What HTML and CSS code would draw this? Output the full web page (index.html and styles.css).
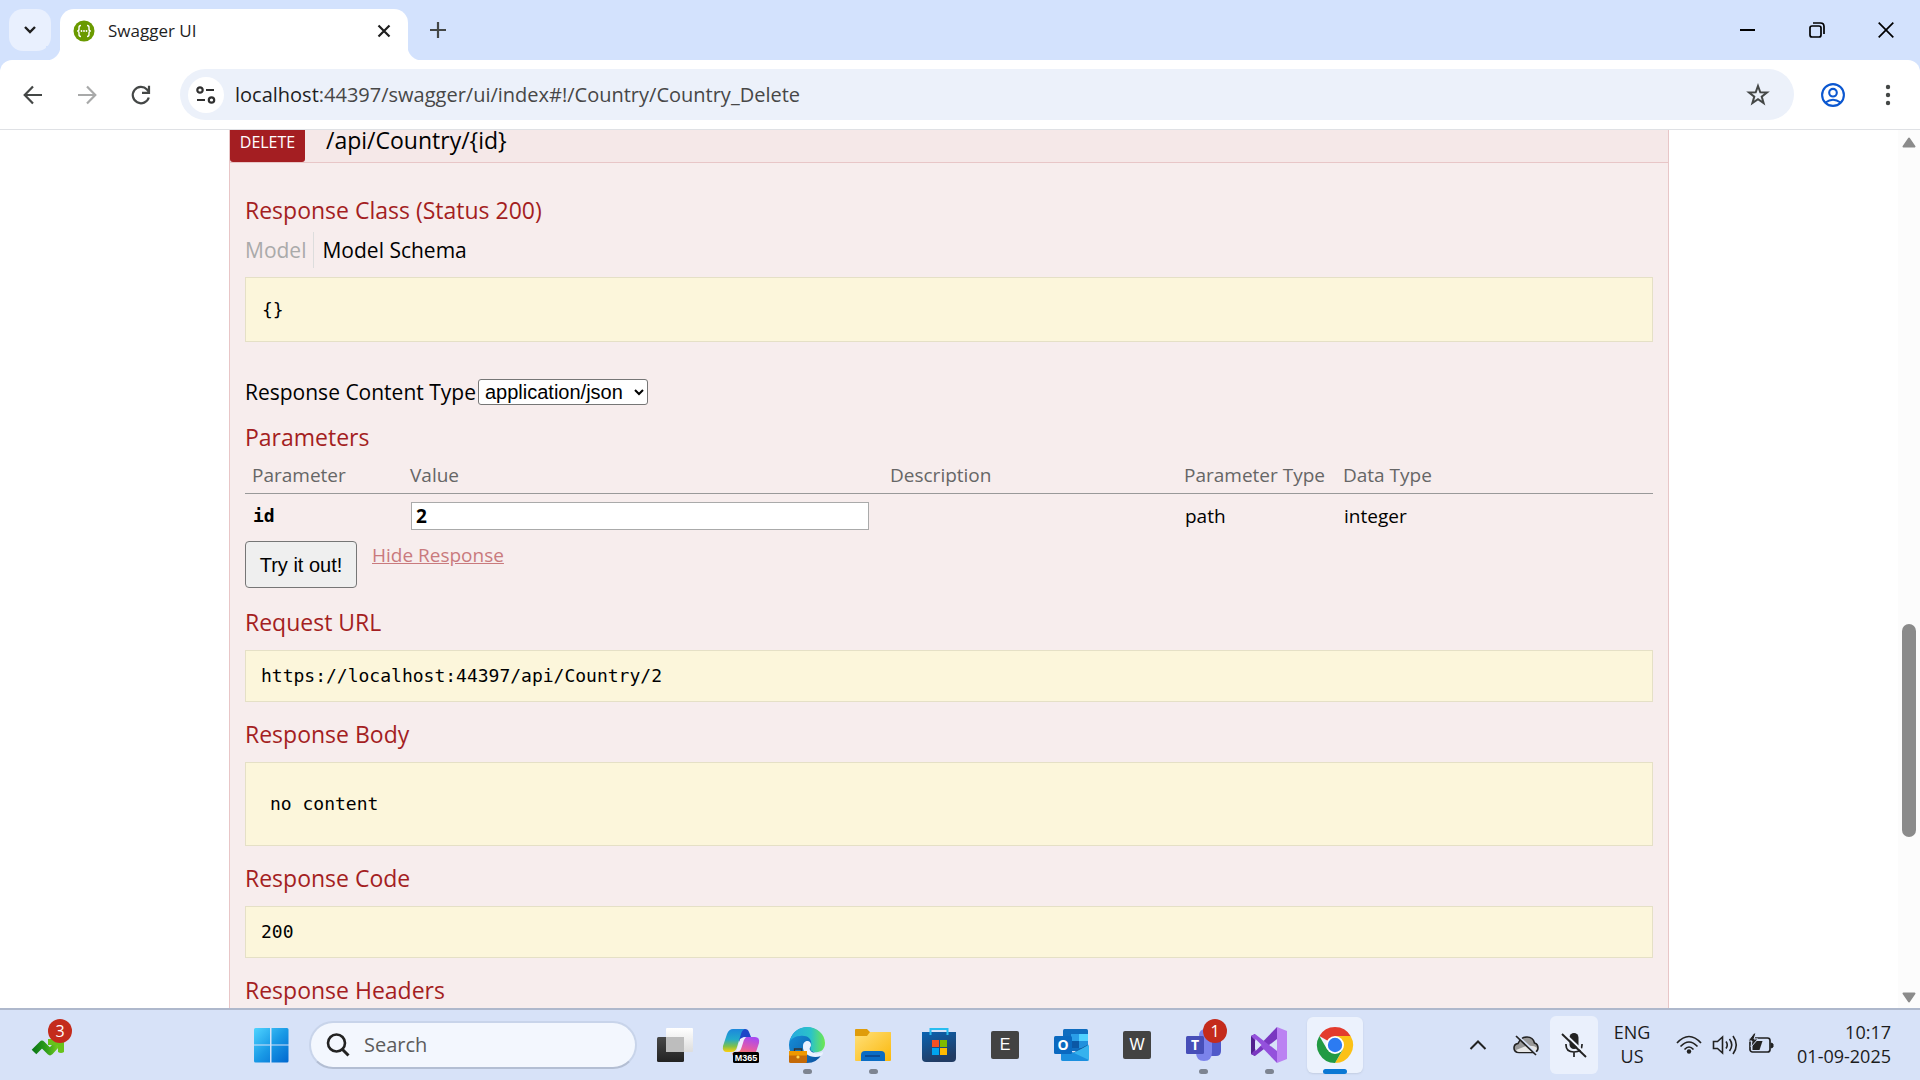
FILE: index.html
```html
<!DOCTYPE html>
<html lang="en">
<head>
<meta charset="utf-8">
<title>Swagger UI</title>
<link rel="stylesheet" href="styles.css">
</head>
<body>
<header class="browser">
  <div class="tabstrip">
    <button class="tab-search" aria-label="Search tabs"><svg width="12" height="8" viewBox="0 0 12 8"><path d="M1 1l5 5 5-5" fill="none" stroke="#1f1f1f" stroke-width="2.4"/></svg></button>
    <div class="tab">
      <svg width="22" height="22" viewBox="0 0 22 22"><circle cx="11" cy="11" r="10.5" fill="#6a9a00"/><path d="M8 5.500q-2 0-2 2v1.500q0 2-1.800 2 1.800 0 1.800 2v1.500q0 2 2 2M14 5.500q2 0 2 2v1.500q0 2 1.800 2-1.800 0-1.800 2v1.500q0 2-2 2" fill="none" stroke="#fff" stroke-width="1.400"/><g fill="#fff"><circle cx="8.500" cy="11" r=".9"/><circle cx="11" cy="11" r=".9"/><circle cx="13.500" cy="11" r=".9"/></g></svg>
      <span class="tab-title">Swagger UI</span>
      <button class="bare" aria-label="Close tab"><svg width="14" height="14" viewBox="0 0 14 14"><path d="M1.500 1.500l11 11m0-11l-11 11" stroke="#1f1f1f" stroke-width="2.200"/></svg></button>
    </div>
    <button class="bare new-tab" aria-label="New tab"><svg width="16" height="16" viewBox="0 0 16 16"><path d="M8 0v16M0 8h16" stroke="#444746" stroke-width="2.200"/></svg></button>
    <div class="window-controls">
      <button class="bare" aria-label="Minimize"><svg width="16" height="16" viewBox="0 0 16 16"><path d="M0 8h15" stroke="#000" stroke-width="2"/></svg></button>
      <button class="bare" aria-label="Restore"><svg width="16" height="16" viewBox="0 0 16 16"><rect x="1" y="4" width="11" height="11" rx="2" fill="none" stroke="#000" stroke-width="1.700"/><path d="M4 1h7.500q3.500 0 3.500 3.500V12" fill="none" stroke="#000" stroke-width="1.700"/></svg></button>
      <button class="bare" aria-label="Close"><svg width="16" height="16" viewBox="0 0 16 16"><path d="M.7.7l14.600 14.600m0-14.600L.7 15.300" stroke="#000" stroke-width="1.700"/></svg></button>
    </div>
  </div>
  <div class="toolbar">
    <button class="bare nav" aria-label="Back"><svg width="20" height="20" viewBox="0 0 20 20"><path d="M19 10H2M10 1.500L1.700 10l8.300 8.500" fill="none" stroke="#444746" stroke-width="2.200"/></svg></button>
    <button class="bare nav" aria-label="Forward"><svg width="20" height="20" viewBox="0 0 20 20"><path d="M1 10h17M10 1.500l8.300 8.500-8.300 8.500" fill="none" stroke="#a8a9a9" stroke-width="2.200"/></svg></button>
    <button class="bare nav" aria-label="Reload"><svg width="20" height="20" viewBox="0 0 20 20"><path d="M17.800 12.500A8.200 8.200 0 1 1 16 4.500L18 7" fill="none" stroke="#444746" stroke-width="2.200"/><path d="M18 .8v7h-7" fill="none" stroke="#444746" stroke-width="2.200"/></svg></button>
    <div class="omnibox">
      <button class="site-info" aria-label="View site information"><svg width="20" height="18" viewBox="0 0 20 18"><g fill="none" stroke="#303030" stroke-width="2.200"><circle cx="4" cy="4" r="2.700"/><path d="M10 4h8M1 14h8"/><circle cx="15.500" cy="14" r="2.700"/></g></svg></button>
      <a class="url" href="#!/Country/Country_Delete"><span class="host">localhost</span>:44397/swagger/ui/index#!/Country/Country_Delete</a>
      <button class="bare" aria-label="Bookmark this tab"><svg width="24" height="24" viewBox="0 0 24 24"><path d="M12 3l2.300 6.300 6.700.2-5.300 4.100 1.900 6.400-5.600-3.800L6.400 20l1.900-6.400L3 9.500l6.700-.2z" fill="none" stroke="#444746" stroke-width="2"/></svg></button>
    </div>
    <button class="bare profile" aria-label="Profile"><svg width="24" height="24" viewBox="0 0 24 24"><g fill="none" stroke="#0b57d0" stroke-width="2.100"><circle cx="12" cy="12" r="10.900"/><circle cx="12" cy="9.700" r="3.800"/><path d="M4.500 19.500q7.500-5.500 15 0"/></g></svg></button>
    <button class="bare dots" aria-label="Menu"><svg width="6" height="22" viewBox="0 0 6 22"><g fill="#444746"><circle cx="3" cy="3" r="2.200"/><circle cx="3" cy="11" r="2.200"/><circle cx="3" cy="19" r="2.200"/></g></svg></button>
  </div>
</header>

<div class="viewport">
  <main class="page">
    <section class="operation">
      <div class="op-heading">
        <a class="method" href="#!/Country/Country_Delete">DELETE</a>
        <a class="path" href="#!/Country/Country_Delete">/api/Country/{id}</a>
      </div>
      <div class="op-content">
        <h4>Response Class (Status 200)</h4>
        <div class="signature-nav">
          <a class="model" href="#model">Model</a>
          <a class="schema" href="#schema">Model Schema</a>
        </div>
        <pre class="snippet schema-box">{}</pre>
        <div class="content-type">
          <label for="ctype">Response Content Type</label>
          <select id="ctype"><option>application/json</option></select>
        </div>
        <h4 class="after-select">Parameters</h4>
        <table>
          <colgroup><col class="c-name"><col class="c-value"><col class="c-desc"><col class="c-kind"><col></colgroup>
          <thead><tr><th>Parameter</th><th>Value</th><th>Description</th><th>Parameter Type</th><th>Data Type</th></tr></thead>
          <tbody><tr><td class="code"><label for="param-id">id</label></td><td class="field"><input id="param-id" type="text" value="2"></td><td></td><td>path</td><td>integer</td></tr></tbody>
        </table>
        <div class="submit-row">
          <button class="submit">Try it out!</button>
          <a class="hide" href="#hide">Hide Response</a>
        </div>
        <h4>Request URL</h4>
        <pre class="snippet">https://localhost:44397/api/Country/2</pre>
        <h4>Response Body</h4>
        <pre class="snippet body-box">no content</pre>
        <h4>Response Code</h4>
        <pre class="snippet">200</pre>
        <h4>Response Headers</h4>
      </div>
    </section>
  </main>
  <div class="scrollbar">
    <svg width="14" height="11" viewBox="0 0 14 11"><path d="M7 1.500L12.500 9.500h-11z" fill="#8b8b8b" stroke="#8b8b8b" stroke-width="2" stroke-linejoin="round"/></svg>
    <div class="track"><div class="thumb"></div></div>
    <svg width="14" height="11" viewBox="0 0 14 11"><path d="M7 9.500L12.500 1.500h-11z" fill="#8b8b8b" stroke="#8b8b8b" stroke-width="2" stroke-linejoin="round"/></svg>
  </div>
</div>

<footer class="taskbar">
  <button class="app widgets" aria-label="Widgets">
    <svg width="36" height="36" viewBox="0 0 36 36"><defs><linearGradient id="wg"><stop offset="0" stop-color="#0d7a17"/><stop offset=".45" stop-color="#2c9c1a"/><stop offset="1" stop-color="#7ed321"/></linearGradient></defs><path d="M4 25l8-8 8 8 10-11" fill="none" stroke="url(#wg)" stroke-width="6.500" stroke-linejoin="round"/><path d="M18 12h16v13q-3 2-6 0v-7h-10z" fill="#67c31b"/></svg>
    <span class="badge">3</span>
  </button>
  <div class="apps">
    <button class="app" aria-label="Start"><svg width="36" height="36" viewBox="0 0 36 36"><defs><linearGradient id="st" x2="1" y2="1"><stop offset="0" stop-color="#4fd4ff"/><stop offset=".5" stop-color="#1a9ae6"/><stop offset="1" stop-color="#0067cf"/></linearGradient></defs><path d="M2.500 1H17v16.500H1V2.500Q1 1 2.500 1zM18.500 1H34q1.500 0 1.500 1.500v15h-17zM1 18.500h16V35.500H2.500Q1 35.500 1 34zM18.500 18.500h17V34q0 1.500-1.500 1.500H18.500z" fill="url(#st)"/></svg></button>
    <label class="search"><svg width="24" height="24" viewBox="0 0 24 24"><circle cx="10.500" cy="10" r="8.500" fill="none" stroke="#222" stroke-width="2.600"/><path d="M16.500 16.500l6 6" stroke="#222" stroke-width="3"/></svg><input type="text" placeholder="Search" aria-label="Search"></label>
    <button class="app" aria-label="Task view"><svg width="36" height="36" viewBox="0 0 36 36"><defs><linearGradient id="tv" x2="0" y2="1"><stop offset="0" stop-color="#484848"/><stop offset="1" stop-color="#222"/></linearGradient><linearGradient id="tw" x2="0" y2="1"><stop offset="0" stop-color="#fff"/><stop offset="1" stop-color="#ddd"/></linearGradient></defs><rect x="0" y="10" width="27" height="25" rx="1.500" fill="url(#tv)"/><rect x="9" y="1" width="27" height="24" rx="1" fill="url(#tw)"/><path d="M9 10h18v15H9z" fill="#bdbdbd"/></svg></button>
    <button class="app" aria-label="Microsoft 365 Copilot"><svg width="36" height="36" viewBox="0 0 36 36"><defs><linearGradient id="ca" x2="0" y2="1"><stop offset="0" stop-color="#1d87dc"/><stop offset=".45" stop-color="#22aacb"/><stop offset=".75" stop-color="#7fc04b"/><stop offset="1" stop-color="#ffcf0c"/></linearGradient><linearGradient id="cb" x1=".6" x2=".3" y2="1"><stop offset="0" stop-color="#a94af0"/><stop offset=".5" stop-color="#e35aa8"/><stop offset="1" stop-color="#ff8f3a"/></linearGradient></defs><path d="M16 2h6q3 0 4 3l2 5h-6q-4 0-6 6z" fill="#1d45c8"/><path d="M10 2h12q-3 1-4 5l-4 13q-1 5-6 5H4q-5 0-4-6l4-12q2-5 6-5z" fill="url(#ca)"/><path d="M24 10h8q5 0 4 6l-3 9q-2 6-8 6H13q-3 0-4-5 5 0 7-6l3-6q2-4 5-4z" fill="url(#cb)"/><path d="M17 12q3-2 6-2-2 2-3 6l-2 6q-1 3-5 3 1-2 2-6z" fill="#eef"/><rect x="10" y="25" width="26" height="11" rx="1.500" fill="#000"/><text x="23" y="34" class="tiny" text-anchor="middle">M365</text></svg></button>
    <button class="app open" aria-label="Edge"><svg width="36" height="36" viewBox="0 0 36 36"><defs><linearGradient id="ea" x2="1"><stop offset="0" stop-color="#26a9df"/><stop offset=".6" stop-color="#2bc3c8"/><stop offset="1" stop-color="#6ee84f"/></linearGradient><linearGradient id="eb" x2="1" y2="1"><stop offset="0" stop-color="#1796df"/><stop offset="1" stop-color="#0b4f9e"/></linearGradient></defs><path d="M0 18A18 18 0 0 1 32 7L24 25q5 3 9 2-5 9-15 9A18 18 0 0 1 0 18z" fill="url(#eb)"/><path d="M1 14C3 5 10 0 18 0c10 0 18 7 18 16 0 7-5 10-11 9-4-1-4-3-3-6 2-8-5-11-11-10C7 9 3 11 1 14z" fill="url(#ea)"/><path d="M14 19c0-6 8-7 8-1 0 2-2 3-1 5 2 4 9 4 13 2 0 2-1 3-2 4-8 3-19-1-18-10z" fill="#eaf2ff"/><rect y="24" width="18" height="12" rx="1.500" fill="#c46a08"/><path d="M0 24h18v4.500H0z" fill="#ee9800"/><path d="M5.500 24v-2h7v2" fill="none" stroke="#333" stroke-width="1.300"/><circle cx="9" cy="30" r="1.600" fill="#ffd34e"/></svg></button>
    <button class="app open" aria-label="File Explorer"><svg width="36" height="36" viewBox="0 0 36 36"><defs><linearGradient id="fe" x2="1" y2="1"><stop offset="0" stop-color="#ffe07a"/><stop offset="1" stop-color="#fbb80b"/></linearGradient></defs><path d="M0 3q0-1 1-1h11l3 3h19q2 0 2 2v6H0z" fill="#df9c0a"/><path d="M0 9h12l3-4h20q1 0 1 1v27q0 1-1 1H1q-1 0-1-1z" fill="url(#fe)"/><path d="M6 34v-6q0-4 4-4h16q4 0 4 4v6z" fill="#0a6cc4"/><path d="M10 29h15" stroke="#0b4084" stroke-width="1.500"/></svg></button>
    <button class="app" aria-label="Microsoft Store"><svg width="36" height="36" viewBox="0 0 36 36"><defs><linearGradient id="ms" x2=".4" y2="1"><stop offset="0" stop-color="#0a63b2"/><stop offset="1" stop-color="#213b63"/></linearGradient></defs><path d="M9.500 7V2h17v5" fill="none" stroke="#28bdf0" stroke-width="2"/><path d="M1 5h34v26q0 4-4 4H5q-4 0-4-4z" fill="url(#ms)"/><path d="M9.500 5v3m17-3v3" stroke="#28bdf0" stroke-width="2"/><path d="M11 13h7v7h-7z" fill="#f25022"/><path d="M19 13h7v7h-7z" fill="#7fba00"/><path d="M11 21h7v7h-7z" fill="#00a4ef"/><path d="M19 21h7v7h-7z" fill="#ffb900"/></svg></button>
    <button class="app"><span class="letter">E</span></button>
    <button class="app" aria-label="Outlook"><svg width="36" height="36" viewBox="0 0 36 36"><rect x="10" y="2" width="25" height="22" rx="1.500" fill="#0f6cbf"/><path d="M18 7h8v7h-8z" fill="#2a9ee8"/><path d="M26 7h9v7h-9z" fill="#4fd0ff"/><path d="M18 14h8v7h-8z" fill="#0b57a5"/><path d="M26 14h9v7h-9z" fill="#2090dd"/><path d="M36 17L9 32V20l13 7z" fill="#0f4a86"/><path d="M36 18v14q0 2-2 2H10q-2 0-2-2z" fill="#35b2ee"/><path d="M8 20l28 13-2 1H10q-2 0-2-2z" fill="#1b8fdf"/><rect x="1" y="9" width="18" height="18" rx="1.500" fill="#0a69c0"/><text x="10" y="23" class="logo-o" text-anchor="middle">O</text></svg></button>
    <button class="app"><span class="letter">W</span></button>
    <button class="app open" aria-label="Teams"><svg width="36" height="36" viewBox="0 0 36 36"><circle cx="20" cy="8" r="6" fill="#7b83eb"/><circle cx="31" cy="9" r="4" fill="#5059c9"/><path d="M22 13h14v11q0 5-5 5h-5z" fill="#5059c9"/><path d="M11 13h16v12q0 9-8 9t-8-9z" fill="#7b83eb"/><rect x="1" y="9" width="18" height="18" rx="1.500" fill="#464eb8"/><text x="10" y="23" class="logo-o" text-anchor="middle">T</text></svg><span class="badge">1</span></button>
    <button class="app open" aria-label="Visual Studio"><svg width="36" height="36" viewBox="0 0 36 36"><path d="M0 9l4-2v22l-4-2z" fill="#52218f"/><path d="M4 29l-4-2L26 0v12z" fill="#7a37c0"/><path d="M0 9l4-2 22 17v12z" fill="#9451dc"/><path d="M26 0l10 4v28l-10 4z" fill="#bb82f2"/><path d="M4.500 12v12l6-6z" fill="#dce6fa"/></svg></button>
    <button class="app active" aria-label="Chrome"><svg width="36" height="36" viewBox="0 0 36 36"><path d="M18 18L2.400 9A18 18 0 0 1 33.600 9z" fill="#e33b2e"/><path d="M18 9h15.600A18 18 0 0 1 18 36l8-13.500z" fill="#fbc116"/><path d="M2.400 9A18 18 0 0 0 18 36l7.800-13.500L10.200 22.500z" fill="#229a43"/><circle cx="18" cy="18" r="9" fill="#fff"/><circle cx="18" cy="18" r="7.200" fill="#2c7bf2"/></svg></button>
  </div>
  <div class="tray">
    <button class="tray-item" aria-label="Show hidden icons"><svg width="18" height="12" viewBox="0 0 18 12"><path d="M1.500 10L9 2.500l7.500 7.500" fill="none" stroke="#222" stroke-width="2"/></svg></button>
    <button class="tray-item" aria-label="OneDrive"><svg width="26" height="22" viewBox="0 0 26 22"><path d="M6 18.500q-5 0-5-4.500 0-4 4-4.500Q8 3 14 3q6 0 7.500 6 3.500 1 3.500 5t-5 4.500z" fill="#999" stroke="#222" stroke-width="1.600"/><path d="M3 16l10-4q8-1 11 2-1 4-4 4H6q-2 0-3-2z" fill="#e6e6e6"/><path d="M4 1l20 19" stroke="#d7e2f8" stroke-width="2"/><path d="M3 2l20 19" stroke="#222" stroke-width="1.700"/></svg></button>
    <button class="tray-item muted" aria-label="Microphone muted"><svg width="26" height="26" viewBox="0 0 26 26"><rect x="8.500" y="1" width="9" height="16" rx="4.500" fill="#222"/><path d="M5 12v1q0 7 8 7t8-7v-1M13 20v5" fill="none" stroke="#222" stroke-width="1.700"/><path d="M3 1l23 22" stroke="#eef3fd" stroke-width="2"/><path d="M1 2l24 23" stroke="#222" stroke-width="1.900"/></svg></button>
    <button class="lang">ENG<br>US</button>
    <button class="system" aria-label="Network, volume and battery">
      <svg width="26" height="20" viewBox="0 0 26 20"><g fill="none" stroke="#222" stroke-width="1.700"><path d="M1 8q12-13 24 0M4.500 11.500q8.500-9 17 0M8.500 14.500q4.500-5 9 0"/></g><circle cx="13" cy="16.500" r="2.200" fill="#222"/></svg>
      <svg width="26" height="20" viewBox="0 0 26 20"><g fill="none" stroke="#222" stroke-width="1.600"><path d="M1.500 6.500v7h4l5 4.500V2L5.500 6.500z"/><path d="M14 6.500q2.500 3.500 0 7M17.500 4q4.500 6 0 12M21 1q6.500 9 0 18"/></g></svg>
      <svg width="26" height="20" viewBox="0 0 26 20"><rect x="2" y="3" width="20" height="14" rx="2.500" fill="none" stroke="#222" stroke-width="1.700"/><path d="M4.500 6h10l-3 9h-7z" fill="#222"/><path d="M23 8l2 1v3l-2 1z" fill="#222" stroke="#222"/><path d="M6-2L0 6h4l-1 6 7-8H6l2-6z" fill="#222" stroke="#d7e2f8" stroke-width="1"/></svg>
    </button>
    <button class="clock">10:17<br>01-09-2025</button>
  </div>
</footer>
</body>
</html>
```
FILE: styles.css
```css
* { box-sizing: border-box; }

body {
  margin: 0;
  height: 100vh;
  display: flex;
  flex-direction: column;
  overflow: hidden;
  background: #fff;
  color: #000;
  font-family: "Open Sans", "Noto Sans", sans-serif;
}

svg { display: block; flex: none; overflow: visible; }
a { color: inherit; text-decoration: none; }
button { font-family: inherit; color: inherit; }

.bare {
  display: flex;
  align-items: center;
  justify-content: center;
  padding: 0;
  border: 0;
  background: none;
}

/* Browser frame */
.browser { background: #d3e2fd; }

.tabstrip {
  display: flex;
  align-items: center;
  height: 60px;
  padding: 0 0 0 9px;
}

.tab-search {
  display: flex;
  align-items: center;
  justify-content: center;
  width: 42px;
  height: 42px;
  margin-right: 9px;
  padding: 0;
  border: 0;
  border-radius: 14px;
  background: #e9f0fe;
}

.tab {
  position: relative;
  display: flex;
  align-items: center;
  align-self: flex-end;
  width: 348px;
  height: 51px;
  padding: 0 17px 8px 13px;
  border-radius: 14px 14px 0 0;
  background: #fff;
}

.tab::before,
.tab::after {
  content: "";
  position: absolute;
  bottom: 0;
  width: 14px;
  height: 14px;
}
.tab::before { left: -14px; background: radial-gradient(circle at 0 0, #d3e2fd 14px, #fff 15px); }
.tab::after { right: -14px; background: radial-gradient(circle at 100% 0, #d3e2fd 14px, #fff 15px); }

.tab-title {
  flex: 1;
  margin-left: 13px;
  font-size: 17px;
  line-height: 24px;
  color: #1f1f1f;
}

.new-tab { width: 60px; }

.window-controls { display: flex; margin-left: auto; }
.window-controls .bare { width: 69px; height: 58px; }

.toolbar {
  display: flex;
  align-items: center;
  height: 70px;
  padding: 0 17px 0 6px;
  border-bottom: 1px solid #dfe1e5;
  border-radius: 12px 12px 0 0;
  background: #fff;
}

.nav { width: 54px; height: 48px; }

.omnibox {
  flex: 1;
  display: flex;
  align-items: center;
  height: 51px;
  margin-left: 12px;
  padding: 0 24px 0 8px;
  border-radius: 26px;
  background: #ecf1fa;
}

.site-info {
  display: flex;
  align-items: center;
  justify-content: center;
  width: 36px;
  height: 36px;
  padding: 0;
  border: 0;
  border-radius: 50%;
  background: #fff;
}

.url {
  flex: 1;
  margin-left: 11px;
  font-size: 20px;
  line-height: 28px;
  color: #474747;
}
.host { color: #1f1f1f; }

.profile { width: 78px; }
.dots { width: 31px; }

/* Page */
.viewport {
  flex: 1;
  display: flex;
  min-height: 0;
  overflow: hidden;
}

.page { flex: 1; }

.operation {
  max-width: 1440px;
  margin: -14px auto 0;
  color: #000;
}

.op-heading {
  display: flex;
  align-items: stretch;
  height: 47px;
  border: 1px solid #e8c6c7;
  background: #f5e8e8;
}

.method {
  width: 75px;
  border-radius: 3px;
  background: #a41e22;
  color: #fff;
  font-size: 16px;
  line-height: 50px;
  text-align: center;
}

.path {
  padding-left: 21px;
  font-size: 23px;
  line-height: 46px;
}

.op-content {
  padding: 31px 15px;
  border: 1px solid #e8c6c7;
  border-top: 0;
  background: #f7eded;
}

h4 {
  margin: 0;
  padding: 16px 0 12px;
  color: #a41e22;
  font-size: 23px;
  font-weight: 400;
  line-height: 32px;
}
.op-content h4:first-child { padding: 0 0 6px; }
.op-content .after-select { padding: 13px 0 4px; }

.signature-nav {
  display: flex;
  font-size: 21px;
  line-height: 36px;
}
.model { padding-right: 7px; border-right: 1px solid #ddd; color: #aaa; }
.schema { padding-left: 8px; }

.snippet {
  margin: 0;
  padding: 12px 15px;
  border: 1px solid #e5e0c6;
  background: #fcf6db;
  font-family: "DejaVu Sans Mono", monospace;
  font-size: 18px;
  line-height: 26px;
}
.schema-box { margin-top: 9px; padding: 19px 16px 18px; }
.body-box { padding: 28px 24px; }

.content-type {
  display: flex;
  align-items: center;
  gap: 2px;
  margin-top: 34px;
  font-size: 21px;
  line-height: 32px;
}

select {
  width: 170px;
  height: 26px;
  padding: 0 2px;
  border: 1px solid #767676;
  border-radius: 3px;
  background: #fff;
  color: #000;
  font: 20px/24px "Liberation Sans", sans-serif;
}

table {
  width: 100%;
  table-layout: fixed;
  border-collapse: collapse;
  font-size: 19px;
  line-height: 28px;
}
.c-name { width: 158px; }
.c-value { width: 480px; }
.c-desc { width: 294px; }
.c-kind { width: 159px; }

th {
  padding: 4px 7px;
  border-bottom: 1px solid #999;
  color: #666;
  font-weight: 400;
  text-align: left;
  white-space: nowrap;
}
td { padding: 8px 8px 11px; }
.code { font-family: "DejaVu Sans Mono", monospace; font-size: 18px; font-weight: 700; }

.field input {
  display: block;
  width: 458px;
  height: 28px;
  padding: 0 4px;
  border: 1px solid #aaa;
  background: #fff;
  font: 700 19px/26px "Open Sans", sans-serif;
}

.submit-row { display: flex; gap: 15px; padding-bottom: 2px; }

.submit {
  width: 112px;
  height: 47px;
  padding: 0;
  border: 1px solid #767676;
  border-radius: 4px;
  background: #efefef;
  font: 20px/24px "Liberation Sans", sans-serif;
}

.hide {
  color: #c97a7d;
  font-size: 19px;
  line-height: 28px;
  text-decoration: underline;
}

/* Scrollbar */
.scrollbar {
  display: flex;
  flex-direction: column;
  align-items: center;
  width: 22px;
  padding: 7px 0 5px;
  background: #fcfcfc;
}
.track {
  flex: 1;
  display: flex;
  flex-direction: column;
  width: 14px;
}
.track::before { content: ""; flex: 475; }
.track::after { content: ""; flex: 155; }
.thumb { flex: 213; border-radius: 7px; background: #8b8b8b; }

/* Taskbar */
.taskbar {
  display: flex;
  align-items: center;
  height: 72px;
  border-top: 2px solid #aeb8cc;
  background: #d7e2f8;
}

.apps { display: flex; align-items: center; gap: 10px; }

.app {
  position: relative;
  display: flex;
  align-items: center;
  justify-content: center;
  width: 56px;
  height: 56px;
  padding: 0;
  border: 0;
  border-radius: 6px;
  background: none;
}
.app.active { background: #ecf2fd; box-shadow: 0 1px 2px #c2cde2; }

.open::after,
.active::after {
  content: "";
  position: absolute;
  bottom: -1px;
  width: 9px;
  height: 5px;
  border-radius: 3px;
  background: #7d8491;
}
.active::after { width: 24px; background: #0a78d4; }

.widgets { margin: 0 167px 0 20px; }

.badge {
  position: absolute;
  top: 2px;
  right: 4px;
  width: 24px;
  height: 24px;
  border-radius: 50%;
  background: #c42b1c;
  color: #fff;
  font-size: 16px;
  line-height: 24px;
  text-align: center;
}

.search {
  display: flex;
  align-items: center;
  width: 328px;
  height: 48px;
  padding: 0 17px 0 15px;
  border: 2px solid #c8d4ea;
  border-bottom-color: #b3bed3;
  border-radius: 24px;
  background: #f3f7fe;
}
.search input {
  flex: 1;
  min-width: 0;
  margin-left: 14px;
  padding: 0;
  border: 0;
  background: none;
  font: 20px/28px "Open Sans", sans-serif;
}
.search input::placeholder { color: #5c5c5c; }

.letter {
  width: 28px;
  height: 28px;
  border-radius: 2px;
  background: #434343;
  color: #fff;
  font: 16px/28px "Liberation Sans", sans-serif;
}

.tiny { fill: #fff; font: 700 9px "Liberation Sans", sans-serif; }
.logo-o { fill: #fff; font: 700 14px "Open Sans", sans-serif; }

.tray { display: flex; align-items: center; margin-left: auto; padding-right: 29px; }

.tray-item {
  display: flex;
  align-items: center;
  justify-content: center;
  width: 48px;
  height: 58px;
  padding: 0;
  border: 0;
  border-radius: 6px;
  background: none;
}
.tray-item.muted { background: #eaf0fc; }

.lang,
.clock {
  padding: 0 0 2px;
  border: 0;
  background: none;
  color: #1c1c1c;
  font-size: 18px;
  line-height: 24px;
}
.lang { width: 68px; }
.clock { text-align: right; white-space: nowrap; }

.system {
  display: flex;
  gap: 10px;
  margin: 0 23px 0 10px;
  padding: 0;
  border: 0;
  background: none;
}
```
